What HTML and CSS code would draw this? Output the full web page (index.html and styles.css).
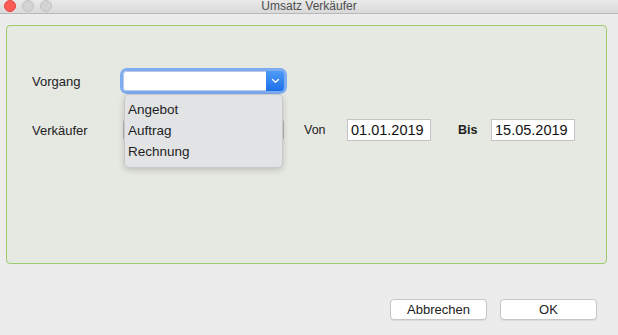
FILE: index.html
```html
<!DOCTYPE html>
<html lang="de">
<head>
<meta charset="UTF-8">
<title>Umsatz Verkäufer</title>
<link rel="stylesheet" href="styles.css">
</head>
<body>
<div class="window">
<div class="titlebar">
<div class="lights">
<span class="light close"></span>
<span class="light"></span>
<span class="light"></span>
</div>
<div class="title">Umsatz Verkäufer</div>
</div>

<div class="panel">
<div class="row row-first">
<label class="label">Vorgang</label>
<div class="combo combo-focus">
<div class="combo-field"></div>
<div class="combo-btn">
<svg width="9" height="6" viewBox="0 0 9 6"><path d="M1.5 1.5 L4.5 4.3 L7.5 1.5" fill="none" stroke="#fff" stroke-width="1.3" stroke-linecap="round" stroke-linejoin="round"/></svg>
</div>
<ul class="popup">
<li>Angebot</li>
<li>Auftrag</li>
<li>Rechnung</li>
</ul>
</div>
</div>

<div class="row">
<label class="label">Verkäufer</label>
<div class="combo combo-plain"></div>
<span class="small-label">Von</span>
<div class="date-field">01.01.2019</div>
<span class="small-label bold">Bis</span>
<div class="date-field">15.05.2019</div>
</div>
</div>

<div class="buttons">
<button class="btn">Abbrechen</button>
<button class="btn">OK</button>
</div>
</div>
</body>
</html>
```

FILE: styles.css
```css
body {
margin: 0;
background: #ececec;
font-family: "Liberation Sans", Arial, sans-serif;
font-size: 13px;
color: #222;
}
.window {
width: 618px;
height: 335px;
overflow: hidden;
}
.titlebar {
position: relative;
height: 13px;
border-bottom: 1px solid #b8b8b8;
background: linear-gradient(#e9e9e9, #d9d9d9);
}
.lights {
position: absolute;
left: 4px;
top: 0;
display: flex;
gap: 6px;
}
.light {
width: 10px;
height: 10px;
border-radius: 50%;
background: #d3d3d3;
border: 1px solid #c2c2c2;
}
.light.close {
background: #fc5b57;
border-color: #e2463f;
}
.title {
text-align: center;
font-size: 12px;
line-height: 12px;
color: #4d4d4d;
}
.panel {
margin: 11px 0 0 6px;
width: 599px;
height: 237px;
border: 1px solid #9dcc6c;
border-radius: 4px;
background: #e6e8e2;
box-sizing: content-box;
}
.row {
display: flex;
align-items: center;
padding-left: 25px;
}
.row-first {
margin-top: 45px;
margin-bottom: 28px;
}
.label {
width: 91px;
}
.combo {
position: relative;
width: 161px;
box-sizing: border-box;
}
.combo-focus {
display: flex;
height: 20px;
border-radius: 4px;
background: #fff;
box-shadow: 0 0 0 3px #7eacf0;
}
.combo-field {
flex: 1;
border: 1px solid #b9c9e6;
border-right: none;
border-radius: 3px 0 0 3px;
}
.combo-btn {
width: 18px;
display: flex;
align-items: center;
justify-content: center;
border-radius: 0 3px 3px 0;
background: linear-gradient(#4d9cf8, #1d6fe8);
}
.combo-plain {
height: 22px;
background: #fff;
border: 1px solid #b5b5b5;
border-radius: 3px;
margin-right: 20px;
}
.popup {
position: absolute;
left: 1px;
top: 23px;
width: 159px;
margin: 0;
padding: 4px 0 5px;
list-style: none;
background: #e2e3e5;
border: 1px solid #c9c9cb;
border-radius: 5px;
box-sizing: border-box;
box-shadow: 0 2px 6px rgba(0,0,0,0.18);
z-index: 2;
}
.popup li {
height: 21px;
line-height: 21px;
padding-left: 3px;
font-size: 13.5px;
color: #1e1e1e;
}
.small-label {
width: 43px;
font-size: 12.5px;
}
.small-label.bold {
width: 33px;
font-weight: bold;
margin-left: 27px;
}
.date-field {
width: 84px;
height: 22px;
box-sizing: border-box;
background: #fff;
border: 1px solid #c4c4c4;
font-size: 14.5px;
line-height: 20px;
padding-left: 3px;
color: #111;
}
.buttons {
display: flex;
justify-content: flex-end;
gap: 13px;
margin: 35px 21px 0 0;
}
.btn {
width: 97px;
height: 21px;
padding: 0;
background: #fff;
border: 1px solid #c6c6c6;
border-radius: 4px;
box-shadow: 0 1px 1px rgba(0,0,0,0.08);
font-family: "Liberation Sans", Arial, sans-serif;
font-size: 13px;
color: #222;
}
```
